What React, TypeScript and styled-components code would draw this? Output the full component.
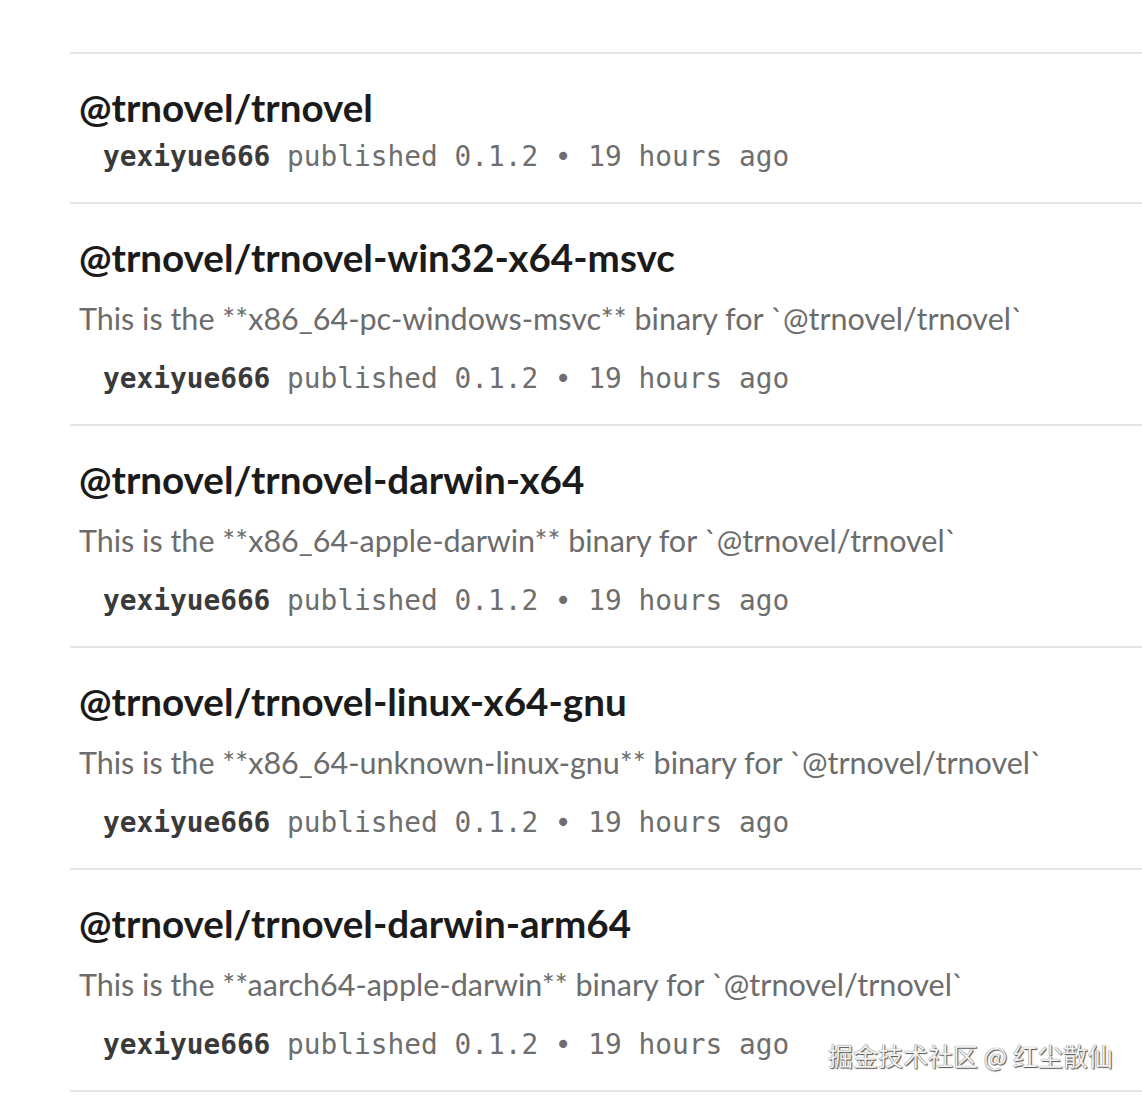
import styled, { createGlobalStyle } from "styled-components";

const GlobalStyle = createGlobalStyle`
    html, body {
        margin: 0;
        padding: 0;
        background: #ffffff;
    }
    body {
        font-family: "Lato", "Noto Sans", sans-serif;
    }
`;

const Page = styled.div`
    position: relative;
    width: 1142px;
    height: 1098px;
    overflow: hidden;
    padding: 52px 0 0 70px;
    box-sizing: border-box;
`;

const List = styled.ul`
    list-style: none;
    margin: 0;
    padding: 0;
    border-top: 2px solid #e6e6e6;
`;

const Item = styled.li`
    padding: 31px 0 25px 9px;
    border-bottom: 2px solid #e6e6e6;
`;

const Title = styled.h3`
    margin: 0;
    font-family: "Lato", "Noto Sans", sans-serif;
    font-weight: 700;
    font-size: 38.6px;
    line-height: 44px;
    color: #1b1b1b;
`;

const Description = styled.p`
    margin: 19px 0 21px;
    font-family: "Lato", "Noto Sans", sans-serif;
    font-weight: 400;
    font-size: 30.5px;
    line-height: 40px;
    color: #6c6c6c;
    white-space: nowrap;
`;

const Meta = styled.div<{ $tight?: boolean }>`
    margin-top: ${(p) => (p.$tight ? "8px" : "0")};
    padding-left: 24px;
    font-family: "DejaVu Sans Mono", "Liberation Mono", monospace;
    font-size: 27.8px;
    line-height: 40px;
    color: #6e6e6e;
    white-space: pre;
`;

const Author = styled.span`
    font-weight: 700;
    color: #3a3a3a;
`;

const Watermark = styled.div`
    position: absolute;
    left: 828px;
    top: 1038px;
    font-family: "Noto Sans CJK SC", sans-serif;
    font-size: 25px;
    line-height: 34px;
    color: #f2f2f2;
    text-shadow: 0 0 1px #444, 1px 1px 1px #555;
    white-space: nowrap;
`;

type Pkg = { name: string; description?: string };

const packages: Pkg[] = [
    { name: "@trnovel/trnovel" },
    {
        name: "@trnovel/trnovel-win32-x64-msvc",
        description: "This is the **x86_64-pc-windows-msvc** binary for `@trnovel/trnovel`",
    },
    {
        name: "@trnovel/trnovel-darwin-x64",
        description: "This is the **x86_64-apple-darwin** binary for `@trnovel/trnovel`",
    },
    {
        name: "@trnovel/trnovel-linux-x64-gnu",
        description: "This is the **x86_64-unknown-linux-gnu** binary for `@trnovel/trnovel`",
    },
    {
        name: "@trnovel/trnovel-darwin-arm64",
        description: "This is the **aarch64-apple-darwin** binary for `@trnovel/trnovel`",
    },
];

export default function App() {
    return (
        <Page>
            <GlobalStyle />
            <List>
                {packages.map((pkg) => (
                    <Item key={pkg.name}>
                        <Title>{pkg.name}</Title>
                        {pkg.description ? <Description>{pkg.description}</Description> : null}
                        <Meta $tight={!pkg.description}>
                            <Author>yexiyue666</Author> published 0.1.2 • 19 hours ago
                        </Meta>
                    </Item>
                ))}
            </List>
            <Watermark>掘金技术社区 @ 红尘散仙</Watermark>
        </Page>
    );
}
